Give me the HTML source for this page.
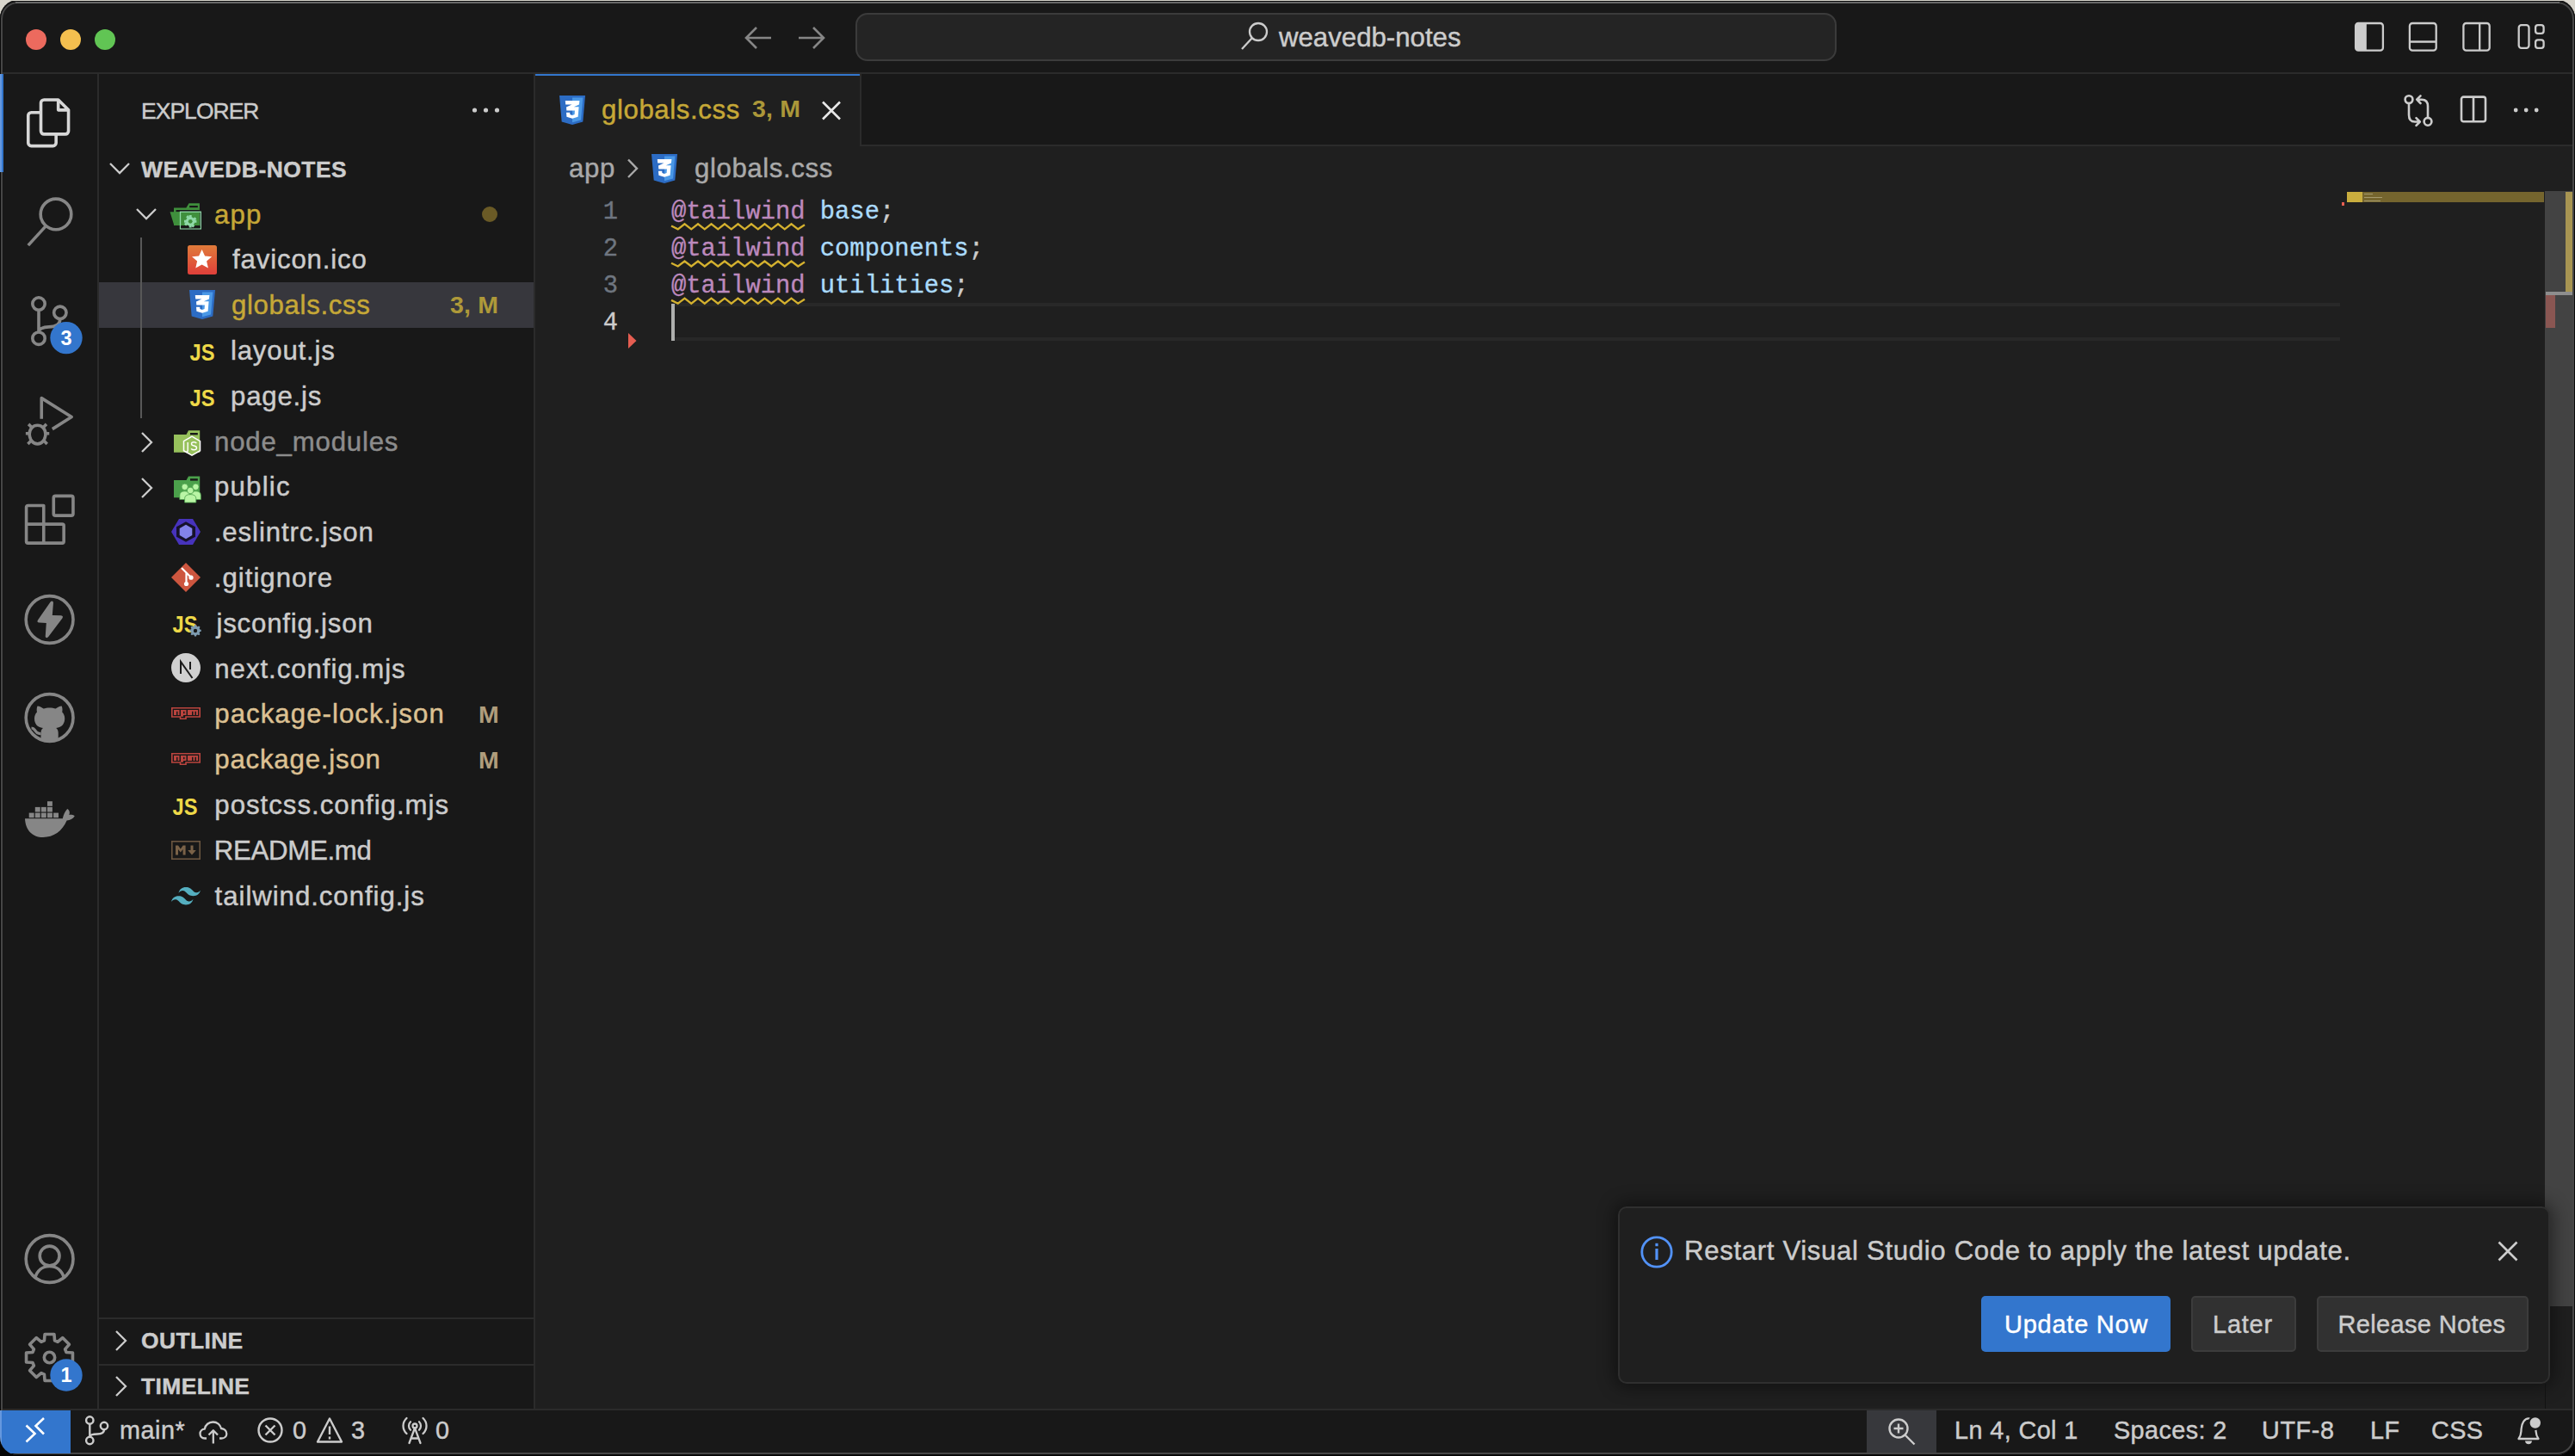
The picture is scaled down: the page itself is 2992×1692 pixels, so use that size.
<!DOCTYPE html>
<html><head><meta charset="utf-8">
<style>
*{margin:0;padding:0;box-sizing:border-box}
html,body{width:2992px;height:1692px;overflow:hidden}
body{background:linear-gradient(#d9d6cd 0,#d9d6cd 50%,#050505 50%,#050505 100%);font-family:"Liberation Sans",sans-serif;position:relative}
#win{position:absolute;left:0;top:0;width:2992px;height:1691px;border-radius:21px;overflow:hidden;background:#181818}
.a{position:absolute}
.t{position:absolute;white-space:nowrap;font-size:31.2px;line-height:31.2px;color:#cccccc;letter-spacing:0.6px;-webkit-text-stroke:0.45px currentColor}
.s{position:absolute;overflow:visible}
.row{position:absolute;left:115px;width:505px;height:52.8px}
</style></head><body>
<div id="win">
<!-- ============ TITLE BAR ============ -->
<div class="a" style="left:0;top:0;width:2992px;height:84px;background:#181818"></div>
<div class="a" style="left:0;top:84px;width:2992px;height:2px;background:#2b2b2b"></div>
<div class="a" style="left:30px;top:34px;width:24px;height:24px;border-radius:50%;background:#ec6a5e"></div>
<div class="a" style="left:70px;top:34px;width:24px;height:24px;border-radius:50%;background:#f4bf4f"></div>
<div class="a" style="left:110px;top:34px;width:24px;height:24px;border-radius:50%;background:#61c554"></div>
<!-- nav arrows -->
<svg class="s" style="left:860px;top:26px" width="42" height="36" viewBox="0 0 42 36"><path d="M36 18H8M19 6L7 18l12 12" fill="none" stroke="#868686" stroke-width="2.6"/></svg>
<svg class="s" style="left:922px;top:26px" width="42" height="36" viewBox="0 0 42 36"><path d="M6 18h28M23 6l12 12-12 12" fill="none" stroke="#868686" stroke-width="2.6"/></svg>
<!-- command center -->
<div class="a" style="left:994px;top:15px;width:1140px;height:56px;border-radius:14px;background:#242424;border:2px solid #3b3b3b"></div>
<svg class="s" style="left:1440px;top:24px" width="36" height="36" viewBox="0 0 36 36"><circle cx="22" cy="13" r="10" fill="none" stroke="#cccccc" stroke-width="2.3"/><path d="M15 20L3 33" stroke="#cccccc" stroke-width="2.3"/></svg>
<div class="t" style="left:1486px;top:28px;letter-spacing:0">weavedb-notes</div>
<!-- layout icons -->
<svg class="s" style="left:2720px;top:15px" width="250" height="55" viewBox="2720 15 250 55" fill="none" stroke="#cccccc" stroke-width="2.3">
 <rect x="2737.1" y="27" width="31.8" height="31.6" rx="3.2"/>
 <path d="M2737.1 30.2A3.2 3.2 0 0 1 2740.3 27H2749.8V58.6H2740.3A3.2 3.2 0 0 1 2737.1 55.4Z" fill="#cccccc" stroke="none"/>
 <path d="M2738 30V55.5" stroke-width="2.2"/>
 <rect x="2799.9" y="27" width="30.8" height="31.6" rx="3.2"/>
 <path d="M2800 48.5H2830.6"/>
 <rect x="2862.4" y="27" width="30.3" height="31.6" rx="3.2"/>
 <path d="M2881.2 27V58.6"/>
 <rect x="2926.7" y="29.2" width="11.8" height="26.6" rx="3"/>
 <rect x="2946.1" y="29.2" width="9.5" height="9.7" rx="2.8"/>
 <rect x="2946.1" y="46.4" width="9.5" height="9.4" rx="2.8"/>
</svg>
<!-- ============ ACTIVITY BAR ============ -->
<div class="a" style="left:113px;top:86px;width:2px;height:1551px;background:#2b2b2b"></div>
<div class="a" style="left:0;top:86px;width:4px;height:114px;background:linear-gradient(90deg,#6598de 0,#6598de 2px,#3376cd 2px);z-index:2"></div>
<svg class="s" style="left:0;top:0" width="115" height="1692" viewBox="0 0 115 1692">
<g fill="none" stroke-width="1" stroke-linejoin="round">
 <g transform="translate(28.8 113.8) scale(3.6)" stroke="#d7d7d7">
  <path d="M5.2 1.6a1 1 0 0 1 1-1H10.8L14.1 3.9V10.7a1 1 0 0 1-1 1H6.2a1 1 0 0 1-1-1Z"/>
  <path d="M10.8 0.6V3.9H14.1" />
  <path d="M5.2 4.7H2.1a1 1 0 0 0-1 1V14.5a1 1 0 0 0 1 1H9.1a1 1 0 0 0 1-1V11.7"/>
 </g>
 <g transform="translate(28.8 229) scale(3.6)" stroke="#868686">
  <circle cx="10.05" cy="5.55" r="4.95"/>
  <path d="M1.1 15.6L6.75 9.4"/>
 </g>
 <g transform="translate(28.8 344.2) scale(3.6)" stroke="#868686">
  <circle cx="4.5" cy="2.45" r="2"/>
  <circle cx="4.5" cy="13.6" r="2"/>
  <circle cx="11.4" cy="5.3" r="2"/>
  <path d="M4.5 4.45V11.6M11.4 7.3C11.4 9.4 9.8 9.9 7.8 9.9C5.8 9.9 4.5 10.6 4.5 11.6"/>
 </g>
 <g transform="translate(28.8 459.4) scale(3.6)" stroke="#868686">
  <path d="M5.4 7.6V0.9L15.1 7.0L8.9 10.9"/>
  <path d="M4.1 9.7c1.5 0 2.6 1.2 2.6 2.8s-1.1 3.2-2.6 3.2-2.6-1.6-2.6-3.2 1.1-2.8 2.6-2.8Z"/>
  <path d="M0.3 12.3H1.5M6.7 12.3H7.9M1.2 9.3L2.2 10.3M7 9.3L6 10.3M1 15.7L2 14.7M7.2 15.7L6.2 14.7"/>
 </g>
 <g transform="translate(28.8 574.6) scale(3.6)" stroke="#868686">
  <path d="M0.5 4.1a.5 .5 0 0 1 .5-.5H6.1V9.6H12.1a.5 .5 0 0 1 .5 .5V15.2a.5 .5 0 0 1-.5.5H1a.5 .5 0 0 1-.5-.5Z"/>
  <path d="M0.5 9.6H6.1V15.7"/>
  <rect x="9.3" y="0.5" width="6.3" height="6.3" rx="0.6"/>
 </g>
 <g stroke="#868686" stroke-width="3.6">
  <circle cx="57.6" cy="720" r="27.4"/>
  <circle cx="57.6" cy="834" r="27.4"/>
  <circle cx="57.6" cy="1463" r="27.4"/>
  <circle cx="57.6" cy="1459.5" r="11.4"/>
  <path d="M40.5 1486C43 1476 50 1471.5 57.6 1471.5S72 1476 74.7 1486"/>
 </g>
</g>
<g fill="#868686">
 <path d="M58.6 699.6Q60.5 697.6 61.8 699.6Q62 700.5 61.9 701.5L60.8 714.9L71 715.2Q74 715.8 72.4 718.4L56.2 740Q54.6 742 53 740.5Q52.6 739.8 52.8 738.5L53.8 724L45.5 723.6Q42.2 723.2 44.2 720.2Z"/>
 <path d="M47.5 860.5V851.5C47.5 849 48.5 847 50 846C43 845 40 841 40 835C40 832 41 829.5 43 827.5C42.5 825.5 42.5 823 43.5 820.5C46 820.5 48.5 822 50.5 823.5C52.5 823 55 822.5 57.6 822.5S62.7 823 64.7 823.5C66.7 822 69.2 820.5 71.7 820.5C72.7 823 72.7 825.5 72.2 827.5C74.2 829.5 75.2 832 75.2 835C75.2 841 72.2 845 65.2 846C66.7 847 67.7 849 67.7 851.5V860.5Z"/>
 <path d="M47.5 852.5C44 853 42 851 40.5 848.5C39.5 847 38 846 36.5 846" fill="none" stroke="#868686" stroke-width="3.2"/>
 <g>
  <path d="M29 951.2H72.8C73.8 946.5 75.8 942.5 78.2 940C80.6 941.2 81.6 944.2 80.2 947C82.5 946.6 85 947 86.8 948.2C84.8 951.6 81.4 953.2 77.6 953.6C72.2 966.2 62.2 973 50 973C37.2 973 29.4 964 29 951.2Z"/>
  <rect x="33.7" y="944.6" width="5.9" height="5.6"/><rect x="40.8" y="944.6" width="5.9" height="5.6"/><rect x="47.9" y="944.6" width="5.9" height="5.6"/><rect x="55" y="944.6" width="5.9" height="5.6"/><rect x="62.1" y="944.6" width="5.9" height="5.6"/>
  <rect x="40.8" y="937.9" width="5.9" height="5.6"/><rect x="47.9" y="937.9" width="5.9" height="5.6"/><rect x="55" y="937.9" width="5.9" height="5.6"/>
  <rect x="55" y="931.2" width="5.9" height="5.6"/>
 </g>
</g>
<g transform="translate(57.5 1577.5)" fill="none" stroke="#868686" stroke-width="3.6" stroke-linejoin="round">
 <path d="M-6.06 -19.58 L-5.46 -26.95 L5.46 -26.95 L6.06 -19.58 L9.56 -18.13 L15.19 -22.92 L22.92 -15.19 L18.13 -9.56 L19.58 -6.06 L26.95 -5.46 L26.95 5.46 L19.58 6.06 L18.13 9.56 L22.92 15.19 L15.19 22.92 L9.56 18.13 L6.06 19.58 L5.46 26.95 L-5.46 26.95 L-6.06 19.58 L-9.56 18.13 L-15.19 22.92 L-22.92 15.19 L-18.13 9.56 L-19.58 6.06 L-26.95 5.46 L-26.95 -5.46 L-19.58 -6.06 L-18.13 -9.56 L-22.92 -15.19 L-15.19 -22.92 L-9.56 -18.13Z"/>
 <circle r="6.2"/>
</g>
<circle cx="77" cy="392.6" r="18.7" fill="#3376cd"/>
<text x="77" y="400.8" text-anchor="middle" font-family="Liberation Sans" font-weight="bold" font-size="23.5" fill="#fff">3</text>
<circle cx="77" cy="1598" r="18.7" fill="#3376cd"/>
<text x="77" y="1606.3" text-anchor="middle" font-family="Liberation Sans" font-weight="bold" font-size="23.5" fill="#fff">1</text>
</svg>


<!-- ============ SIDEBAR ============ -->
<div class="a" style="left:620px;top:86px;width:2px;height:1551px;background:#2b2b2b"></div>
<svg width="0" height="0" style="position:absolute">
<defs>
 <symbol id="i-css" viewBox="0 0 30 34">
  <path d="M0 0H30L27.3 30.5L15 34L2.7 30.5Z" fill="#2c6cc4"/>
  <path d="M15 2.6H27.3L25 28.5L15 31.3Z" fill="#4a98e6"/>
  <path d="M6.8 6H23.4L22.9 10.6L16.8 13.3H22.6L21.6 24.7L15 26.7L8.4 24.7L8 19.8H12.2L12.4 22.1L15 22.9L17.6 22.1L17.9 17.5H8.3L8 13.5L14.4 10.4H7.2Z" fill="#fff"/>
 </symbol>
 <symbol id="i-fav" viewBox="0 0 34 34">
  <defs><linearGradient id="gfav" x1="0" y1="0" x2="0" y2="1"><stop offset="0" stop-color="#e07b3a"/><stop offset="1" stop-color="#df3f3a"/></linearGradient></defs>
  <rect x="0" y="0" width="34" height="34" rx="2.5" fill="url(#gfav)"/>
  <path d="M16.6 5L20.1 12.6L28.2 13.3L22.1 18.6L23.9 26.6L16.6 22.4L9.3 26.6L11.1 18.6L5 13.3L13.1 12.6Z" fill="#fff"/>
 </symbol>
 <symbol id="i-js" viewBox="0 0 30 22">
  <text x="15" y="20.5" text-anchor="middle" font-family="Liberation Sans" font-weight="bold" font-size="27" fill="#eed848" textLength="29" lengthAdjust="spacingAndGlyphs">JS</text>
 </symbol>
 <symbol id="i-fapp" viewBox="0 0 36 32">
  <path d="M6 4H15L17 1H26V6H34V28H6Z" fill="#3f8f3c"/>
  <path d="M0 9H33L30 28H4Z" fill="#47a043"/>
  <rect x="11.5" y="12.5" width="23.5" height="18.5" rx="1" fill="#2e6b2c" stroke="#7cc97a" stroke-width="1.3"/>
  <g transform="translate(22.5 21.5)" fill="#8fd18c"><circle r="4.2"/><path d="M-1.2-6.3h2.4v2.5h-2.4zM-1.2 3.8h2.4v2.5h-2.4zM-6.3-1.2v2.4h2.5v-2.4zM3.8-1.2v2.4h2.5v-2.4z"/><path d="M-4.5-4.5l1.7-1.7 1.8 1.8-1.7 1.7zM4.5 4.5l-1.7 1.7-1.8-1.8 1.7-1.7zM4.5-4.5l1.7 1.7-1.8 1.8-1.7-1.7zM-4.5 4.5l-1.7-1.7 1.8-1.8 1.7 1.7z"/><circle r="1.6" fill="#2e6b2c"/></g>
 </symbol>
 <symbol id="i-fnode" viewBox="0 0 36 32">
  <path d="M0 3H13L16 7H30V28H0Z" fill="#8cbf54"/>
  <path d="M24 13L31.5 17.3V26L24 30.3L16.5 26V17.3Z" fill="#181818" stroke="#ffffff" stroke-width="1.3"/>
  <text x="24" y="27" text-anchor="middle" font-family="Liberation Sans" font-size="10" fill="#fff">JS</text>
 </symbol>
 <symbol id="i-fpub" viewBox="0 0 36 32">
  <path d="M0 3H13L16 7H30V28H0Z" fill="#4aa14a"/>
  <g fill="#a5e09a"><circle cx="13" cy="14" r="3"/><circle cx="27" cy="14" r="3"/><circle cx="20" cy="17" r="3.3"/><path d="M7.5 25c0-4 2.5-6.5 5.5-6.5s5.5 2.5 5.5 6.5z"/><path d="M21.5 25c0-4 2.5-6.5 5.5-6.5s5.5 2.5 5.5 6.5z"/><path d="M13.5 31c0-5 3-8 6.5-8s6.5 3 6.5 8z"/></g>
 </symbol>
 <symbol id="i-eslint" viewBox="0 0 34 30">
  <path d="M9 0H25L34 15L25 30H9L0 15Z" fill="#4733bc"/>
  <path d="M17 3.2L28 9.2V20.8L17 26.8L6 20.8V9.2Z" fill="#16122b"/>
  <path d="M17 6.8L24.3 11V19L17 23.2L9.7 19V11Z" fill="#8383ea"/>
 </symbol>
 <symbol id="i-git" viewBox="0 0 34 34">
  <path d="M17 0L34 17L17 34L0 17Z" fill="#cd563f"/>
  <path d="M12 6L17.5 11.5M17.5 11.5V24M17.5 11.5L23 17" stroke="#fff" stroke-width="2.2" fill="none"/>
  <circle cx="17.5" cy="24.5" r="2.6" fill="#fff"/><circle cx="23" cy="17.2" r="2.6" fill="#fff"/>
 </symbol>
 <symbol id="i-next" viewBox="0 0 34 34">
  <circle cx="17" cy="17" r="17" fill="#d0d0d0"/>
  <path d="M11 24V10L24.5 29" stroke="#1b1b1b" stroke-width="2" fill="none"/>
  <path d="M22 10V19" stroke="#1b1b1b" stroke-width="2"/>
 </symbol>
 <symbol id="i-npm" viewBox="0 0 34 14">
  <path d="M0.8 0.8H33.2V11H17V13.2H10.5V11H0.8Z" fill="none" stroke="#bb443e" stroke-width="1.6"/>
  <path d="M3 3H9.5V9H7.5V4.8H6V9H3ZM11 3H17.5V9H14V10.8H11ZM14 4.8V7.2H15.5V4.8ZM19 3H31V9H29V4.8H27.5V9H25.5V4.8H24V9H19Z" fill="#bb443e"/>
 </symbol>
 <symbol id="i-md" viewBox="0 0 34 22">
  <rect x="0.8" y="0.8" width="32.4" height="20.4" fill="none" stroke="#6b5640" stroke-width="1.6"/>
  <path d="M5 16.5V5.5H8L10.8 9.5L13.6 5.5H16.6V16.5H13.6V10L10.8 13.5L8 10V16.5Z" fill="#7a6248"/>
  <path d="M22.5 5.5H25.5V11H28.8L24 16.5L19.2 11H22.5Z" fill="#7a6248"/>
 </symbol>
 <symbol id="i-tw" viewBox="0 0 34 22">
  <path d="M17 1C12.5 1 9.7 3.2 8.5 7.7C10.2 5.5 12.2 4.6 14.5 5.2C15.8 5.5 16.7 6.5 17.7 7.5C19.4 9.2 21.3 11.2 25.5 11.2C30 11.2 32.8 9 34 4.5C32.3 6.7 30.3 7.6 28 7C26.7 6.7 25.8 5.7 24.8 4.7C23.1 3 21.2 1 17 1ZM8.5 11.2C4 11.2 1.2 13.4 0 17.9C1.7 15.7 3.7 14.8 6 15.4C7.3 15.7 8.2 16.7 9.2 17.7C10.9 19.4 12.8 21.4 17 21.4C21.5 21.4 24.3 19.2 25.5 14.7C23.8 16.9 21.8 17.8 19.5 17.2C18.2 16.9 17.3 15.9 16.3 14.9C14.6 13.2 12.7 11.2 8.5 11.2Z" fill="#55afc0"/>
 </symbol>
 <symbol id="i-gear" viewBox="-8 -8 16 16">
  <path d="M-1.2-7H1.2L1.6-5.2 3.2-4.5 4.8-5.5 6.5-3.8 5.5-2.2 6.1-0.6 7.9-0.3V2.1L6.1 2.5 5.4 4.1 6.5 5.7 4.8 7.4 3.2 6.4 1.6 7.1 1.2 8.9H-1.2L-1.6 7.1-3.2 6.4-4.8 7.4-6.5 5.7-5.5 4.1-6.1 2.5-7.9 2.1V-0.3L-6.1-0.6-5.5-2.2-6.5-3.8-4.8-5.5-3.2-4.5-1.6-5.2Z" transform="translate(0 -0.95) scale(0.85)" fill="#7d9bb0"/>
  <circle cx="0" cy="0" r="2.2" fill="#181818"/>
 </symbol>
</defs>
</svg>
<div class="t" style="left:164px;top:116px;font-size:26.4px;line-height:26.4px;letter-spacing:-0.9px">EXPLORER</div>
<svg class="s" style="left:540px;top:118px" width="50" height="20" viewBox="0 0 50 20"><circle cx="11.5" cy="10" r="2.6" fill="#cccccc"/><circle cx="24.5" cy="10" r="2.6" fill="#cccccc"/><circle cx="37.5" cy="10" r="2.6" fill="#cccccc"/></svg>
<!-- section header -->
<svg class="s" style="left:125px;top:184px" width="30" height="24" viewBox="0 0 30 24"><path d="M3 6L14 17L25 6" fill="none" stroke="#cccccc" stroke-width="2.3"/></svg>
<div class="t" style="left:164px;top:183.5px;font-size:26.4px;line-height:26.4px;font-weight:bold;letter-spacing:0.5px">WEAVEDB-NOTES</div>
<!-- rows -->
<div class="a" style="left:115px;top:328.4px;width:505px;height:52.8px;background:#37373d"></div>
<div class="a" style="left:162.7px;top:276px;width:2px;height:210px;background:#585858"></div>
<svg class="s" style="left:152px;top:236px" width="36" height="26" viewBox="0 0 36 26"><path d="M7 7L18 18L29 7" fill="none" stroke="#cccccc" stroke-width="2.3"/></svg>
<svg class="s" style="left:195px;top:232px" width="42" height="38" viewBox="195 232 42 38">
 <path d="M202 262V241.5H216.4L219.5 236.3H231.9V262Z" fill="#3f8f3c"/>
 <rect x="220.2" y="239" width="9.6" height="2.2" fill="#181818"/>
 <rect x="204.5" y="244" width="27.4" height="2.3" fill="#181818"/>
 <path d="M197.5 246.3H231.9V262H202.4Z" fill="#3f8f3c"/>
 <rect x="209.5" y="246.2" width="23.8" height="19.7" fill="none" stroke="#8fd9a8" stroke-width="1.3"/>
 <path d="M210.2 262.6H232.6V265.3H210.2Z" fill="#181818"/>
 <g transform="translate(221.2 257.3)" fill="#8fd9a8"><circle r="5.3"/><path d="M-1.5-7.2h3v3h-3zM-1.5 4.2h3v3h-3zM-7.2-1.5v3h3v-3zM4.2-1.5v3h3v-3z"/><path d="M-5.1-5.1l2.1-2.1 2.1 2.1-2.1 2.1zM5.1 5.1l-2.1 2.1-2.1-2.1 2.1-2.1zM5.1-5.1l2.1 2.1-2.1 2.1-2.1-2.1zM-5.1 5.1l-2.1-2.1 2.1-2.1 2.1 2.1z"/><circle r="2.4" fill="#3f8f3c"/></g>
</svg>
<div class="t" style="left:249.0px;top:233.6px;letter-spacing:1.10px;color:#c6a837">app</div>
<div class="a" style="left:560px;top:240px;width:18px;height:18px;border-radius:50%;background:#6a5a26"></div>

<svg class="s" style="left:218px;top:285px" width="34" height="34"><use href="#i-fav"/></svg>
<div class="t" style="left:270.0px;top:286.4px;letter-spacing:0.85px;">favicon.ico</div>

<svg class="s" style="left:220px;top:337px" width="30" height="34"><use href="#i-css"/></svg>
<div class="t" style="left:269.0px;top:339.2px;letter-spacing:0.65px;color:#c6a837">globals.css</div>
<div class="t" style="left:523px;top:340px;font-size:28.5px;line-height:28.5px;font-weight:bold;-webkit-text-stroke:0;color:#ae9939;letter-spacing:0.2px">3, M</div>

<svg class="s" style="left:220px;top:398px" width="30" height="22"><use href="#i-js"/></svg>
<div class="t" style="left:268.0px;top:392px;letter-spacing:0.80px;">layout.js</div>

<svg class="s" style="left:220px;top:451px" width="30" height="22"><use href="#i-js"/></svg>
<div class="t" style="left:268.0px;top:444.8px;letter-spacing:0.80px;">page.js</div>

<svg class="s" style="left:156px;top:500px" width="28" height="28" viewBox="0 0 28 28"><path d="M9 3L20 14L9 25" fill="none" stroke="#cccccc" stroke-width="2.3"/></svg>
<svg class="s" style="left:195px;top:495px" width="42" height="40" viewBox="195 495 42 40">
 <path d="M202 525.7V505H216.5L219 500.3H232.2V525.7Z" fill="#97c15c"/>
 <rect x="221" y="503" width="8.8" height="2.4" fill="#181818"/>
 <path d="M223 507.2L232.5 512.7V523.7L223 529.2L213.5 523.7V512.7Z" fill="#97c15c" stroke="#ffffff" stroke-width="1.5"/>
 <path d="M218.2 514V523.3Q218.2 525.5 216 525.5" fill="none" stroke="#fff" stroke-width="1.4"/>
 <path d="M228.3 515.2Q227.5 513.8 225.3 513.8Q222.5 513.8 222.5 515.8Q222.5 517.6 225.3 518Q228.5 518.5 228.5 520.5Q228.5 522.8 225.3 522.8Q223 522.8 222.2 521.3" fill="none" stroke="#fff" stroke-width="1.4"/>
</svg>
<div class="t" style="left:249.0px;top:497.6px;letter-spacing:0.80px;color:#8c8c8c">node_modules</div>

<svg class="s" style="left:156px;top:553px" width="28" height="28" viewBox="0 0 28 28"><path d="M9 3L20 14L9 25" fill="none" stroke="#cccccc" stroke-width="2.3"/></svg>
<svg class="s" style="left:195px;top:548px" width="42" height="42" viewBox="195 548 42 42">
 <path d="M202 578.2V558H216.5L219 553.5H232.2V578.2Z" fill="#4ba14b"/>
 <rect x="221" y="556.2" width="8.8" height="2.4" fill="#181818"/>
 <g fill="#b9f5a5" stroke="#4ba14b" stroke-width="0.8">
  <circle cx="214.7" cy="565.8" r="3.7"/><circle cx="227.4" cy="565.8" r="3.7"/>
  <path d="M208.8 580.5V575.5Q208.8 570.8 214.7 570.8Q220.6 570.8 220.6 575.5V580.5Z"/>
  <path d="M221.5 580.5V575.5Q221.5 570.8 227.4 570.8Q233.3 570.8 233.3 575.5V580.5Z"/>
  <circle cx="221.2" cy="570" r="3.8"/>
  <path d="M214.6 584V579.5Q214.6 574.6 221.2 574.6Q227.8 574.6 227.8 579.5V584Z"/>
 </g>
</svg>
<div class="t" style="left:249.0px;top:550.4px;letter-spacing:1.20px;">public</div>

<svg class="s" style="left:199px;top:603px" width="34" height="30"><use href="#i-eslint"/></svg>
<div class="t" style="left:248.8px;top:603.2px;letter-spacing:0.90px;">.eslintrc.json</div>

<svg class="s" style="left:199px;top:654px" width="34" height="34"><use href="#i-git"/></svg>
<div class="t" style="left:248.8px;top:656px;letter-spacing:1.00px;">.gitignore</div>

<svg class="s" style="left:200px;top:714px" width="30" height="22"><use href="#i-js"/></svg>
<svg class="s" style="left:219px;top:725px" width="16" height="16"><use href="#i-gear"/></svg>
<div class="t" style="left:251.5px;top:708.8px;letter-spacing:0.80px;">jsconfig.json</div>

<svg class="s" style="left:199px;top:759px" width="34" height="34"><use href="#i-next"/></svg>
<div class="t" style="left:249.3px;top:761.6px;letter-spacing:0.95px;">next.config.mjs</div>

<svg class="s" style="left:199px;top:822px" width="34" height="14"><use href="#i-npm"/></svg>
<div class="t" style="left:249.3px;top:814.4px;letter-spacing:1.05px;color:#dcc193">package-lock.json</div>
<div class="t" style="left:556px;top:816.2px;font-size:28.5px;line-height:28.5px;font-weight:bold;-webkit-text-stroke:0;color:#b09d7c">M</div>

<svg class="s" style="left:199px;top:875px" width="34" height="14"><use href="#i-npm"/></svg>
<div class="t" style="left:249.3px;top:867.2px;letter-spacing:0.80px;color:#dcc193">package.json</div>
<div class="t" style="left:556px;top:869px;font-size:28.5px;line-height:28.5px;font-weight:bold;-webkit-text-stroke:0;color:#b09d7c">M</div>

<svg class="s" style="left:200px;top:926px" width="30" height="22"><use href="#i-js"/></svg>
<div class="t" style="left:249.3px;top:920px;letter-spacing:1.00px;">postcss.config.mjs</div>

<svg class="s" style="left:199px;top:977px" width="34" height="22"><use href="#i-md"/></svg>
<div class="t" style="left:248.8px;top:972.8px;letter-spacing:-0.30px;">README.md</div>

<svg class="s" style="left:199px;top:1030px" width="34" height="22"><use href="#i-tw"/></svg>
<div class="t" style="left:249.6px;top:1025.6px;letter-spacing:0.95px;">tailwind.config.js</div>

<!-- outline / timeline -->
<div class="a" style="left:115px;top:1531px;width:505px;height:2px;background:#2b2b2b"></div>
<div class="a" style="left:115px;top:1585px;width:505px;height:2px;background:#2b2b2b"></div>
<svg class="s" style="left:128px;top:1544px" width="28" height="28" viewBox="0 0 28 28"><path d="M7 3L18 14L7 25" fill="none" stroke="#cccccc" stroke-width="2.3"/></svg>
<div class="t" style="left:164px;top:1545px;font-size:26.4px;line-height:26.4px;font-weight:bold;letter-spacing:0.4px">OUTLINE</div>
<svg class="s" style="left:128px;top:1597px" width="28" height="28" viewBox="0 0 28 28"><path d="M7 3L18 14L7 25" fill="none" stroke="#cccccc" stroke-width="2.3"/></svg>
<div class="t" style="left:164px;top:1598px;font-size:26.4px;line-height:26.4px;font-weight:bold;letter-spacing:0.4px">TIMELINE</div>


<!-- ============ EDITOR ============ -->
<div class="a" style="left:622px;top:86px;width:2370px;height:82px;background:#181818"></div>
<div class="a" style="left:622px;top:168px;width:2370px;height:2px;background:#2b2b2b"></div>
<div class="a" style="left:622px;top:170px;width:2370px;height:1467px;background:#1f1f1f"></div>
<!-- active tab -->
<div class="a" style="left:622px;top:86px;width:377px;height:84px;background:#1f1f1f"></div>
<div class="a" style="left:622px;top:86px;width:377px;height:2px;background:#3376cd"></div>
<div class="a" style="left:999px;top:86px;width:2px;height:82px;background:#2b2b2b"></div>
<svg class="s" style="left:650px;top:110.5px" width="30" height="34"><use href="#i-css"/></svg>
<div class="t" style="left:699px;top:112px;color:#c6a837">globals.css</div>
<div class="t" style="left:874px;top:112.3px;font-size:28.5px;line-height:28.5px;font-weight:bold;-webkit-text-stroke:0;color:#ab9739;letter-spacing:0.2px">3, M</div>
<svg class="s" style="left:952px;top:114px" width="28" height="28" viewBox="0 0 28 28"><path d="M4 4.5L24 24.5M24 4.5L4 24.5" stroke="#e8e8e8" stroke-width="2.6"/></svg>
<!-- editor actions -->
<svg class="s" style="left:2785px;top:105px" width="45" height="45" viewBox="2785 105 45 45" fill="none" stroke="#cccccc" stroke-width="2.6" stroke-linecap="round" stroke-linejoin="round">
 <circle cx="2799" cy="115.6" r="4.4"/><circle cx="2821" cy="141.3" r="4.4"/>
 <path d="M2799 120V133.5Q2799 141.5 2806 141.5H2811.5M2807.5 137.2L2811.8 141.5L2807.5 145.8"/>
 <path d="M2821 136.9V123.5Q2821 115.7 2814 115.7H2808.5M2812.5 111.4L2808.2 115.7L2812.5 120"/>
</svg>
<svg class="s" style="left:2855px;top:108px" width="40" height="38" viewBox="0 0 40 38" fill="none" stroke="#cccccc" stroke-width="2.6"><rect x="5" y="4.6" width="28" height="28.6" rx="2.5"/><path d="M19 4.6V33.2"/></svg>
<svg class="s" style="left:2916px;top:116.5px" width="40" height="22" viewBox="0 0 40 22"><circle cx="7.2" cy="11" r="2.4" fill="#cccccc"/><circle cx="19.2" cy="11" r="2.4" fill="#cccccc"/><circle cx="31.2" cy="11" r="2.4" fill="#cccccc"/></svg>
<!-- breadcrumbs -->
<div class="t" style="left:661px;top:179.6px;color:#a9a9a9">app</div>
<svg class="s" style="left:724px;top:182px" width="22" height="28" viewBox="0 0 22 28"><path d="M6 3.5L16 13.8L6 24" fill="none" stroke="#a9a9a9" stroke-width="2.4"/></svg>
<svg class="s" style="left:757px;top:179px" width="30" height="34"><use href="#i-css"/></svg>
<div class="t" style="left:807px;top:179.6px;color:#a9a9a9">globals.css</div>
<!-- line numbers -->
<div class="a" style="left:600px;top:224.7px;width:118px;text-align:right;font-family:'Liberation Mono',monospace;font-size:28.8px;line-height:43.2px;color:#6f7680;white-space:pre;-webkit-text-stroke:0.35px currentColor">1
2
3
<span style="color:#cccccc">4</span></div>
<!-- current line -->
<div class="a" style="left:780px;top:352.4px;width:1939px;height:43.5px;border-top:4px solid #282828;border-bottom:4px solid #282828"></div>
<div class="a" style="left:780px;top:353.4px;width:4.4px;height:42.5px;background:#aeafad"></div>
<svg class="s" style="left:729px;top:386px" width="12" height="20" viewBox="0 0 12 20"><path d="M1 1L10.5 10L1 19Z" fill="#e55d51"/></svg>
<!-- code -->
<div class="a" style="left:780px;top:224.7px;font-family:'Liberation Mono',monospace;font-size:28.8px;line-height:43.2px;color:#cccccc;white-space:pre;-webkit-text-stroke:0.35px currentColor"><span style="color:#bc89bd">@tailwind</span> <span style="color:#aadafa">base</span>;
<span style="color:#bc89bd">@tailwind</span> <span style="color:#aadafa">components</span>;
<span style="color:#bc89bd">@tailwind</span> <span style="color:#aadafa">utilities</span>;</div>
<svg class="s" style="left:778px;top:256px" width="160" height="100" viewBox="0 0 160 100">
 <g fill="none" stroke="#d4b12f" stroke-width="2.3" stroke-linejoin="miter">
  <path id="sq" d="M2 6.5L9.75 10.3L17.5 4.3L25.25 10.3L33 4.3L40.75 10.3L48.5 4.3L56.25 10.3L64 4.3L71.75 10.3L79.5 4.3L87.25 10.3L95 4.3L102.75 10.3L110.5 4.3L118.25 10.3L126 4.3L133.75 10.3L141.5 4.3L149.25 10.3L157 5.3"/>
  <use href="#sq" y="43.2"/>
  <use href="#sq" y="86.4"/>
 </g>
</svg>
<!-- minimap -->
<div class="a" style="left:2727px;top:223px;width:18px;height:12px;background:#c9ad3e"></div>
<div class="a" style="left:2745px;top:223px;width:211px;height:12px;background:#75652e"></div>
<div class="a" style="left:2747px;top:224.5px;width:10px;height:1.6px;background:#a59a6e"></div>
<div class="a" style="left:2747px;top:228.5px;width:21px;height:1.6px;background:#a59a6e"></div>
<div class="a" style="left:2747px;top:232.5px;width:19px;height:1.6px;background:#a59a6e"></div>
<div class="a" style="left:2721px;top:235px;width:2.5px;height:4px;background:#e55d51"></div>
<!-- scrollbar -->
<div class="a" style="left:2957px;top:222px;width:33px;height:1296px;background:#434343"></div>
<div class="a" style="left:2981px;top:223px;width:9px;height:116px;background:#a89552"></div>
<div class="a" style="left:2958px;top:339px;width:32px;height:4px;background:#8e8e8e"></div>
<div class="a" style="left:2958px;top:343px;width:10.5px;height:38px;background:#8a5652"></div>
<!-- notification -->
<div class="a" style="left:1880px;top:1402px;width:1083px;height:206px;border-radius:10px;background:#1f1f1f;border:2px solid #2f2f2f;box-shadow:0 0 20px 4px rgba(0,0,0,0.45)"></div>
<svg class="s" style="left:1904px;top:1434px" width="42" height="42" viewBox="0 0 42 42"><circle cx="21" cy="21" r="17.2" fill="none" stroke="#5292f7" stroke-width="2.8"/><rect x="19.4" y="10.8" width="3.2" height="3.4" fill="#5292f7"/><path d="M21 17V30" stroke="#5292f7" stroke-width="3.2"/></svg>
<div class="t" style="left:1957px;top:1438.4px;letter-spacing:0.65px">Restart Visual Studio Code to apply the latest update.</div>
<svg class="s" style="left:2900px;top:1440px" width="28" height="28" viewBox="0 0 28 28"><path d="M3.5 3.5L24.5 24.5M24.5 3.5L3.5 24.5" stroke="#cccccc" stroke-width="2.6"/></svg>
<div class="a" style="left:2302px;top:1506px;width:220px;height:65px;border-radius:5px;background:#3376cd"></div>
<div class="t" style="left:2329px;top:1524.5px;color:#ffffff;font-size:29px;line-height:29px;letter-spacing:0.75px">Update Now</div>
<div class="a" style="left:2546px;top:1506px;width:122px;height:65px;border-radius:5px;background:#313131;border:2px solid #3c3c3c"></div>
<div class="t" style="left:2571px;top:1524.5px;font-size:29px;line-height:29px;letter-spacing:0.75px">Later</div>
<div class="a" style="left:2692px;top:1506px;width:246px;height:65px;border-radius:5px;background:#313131;border:2px solid #3c3c3c"></div>
<div class="t" style="left:2716.5px;top:1524.5px;font-size:29px;line-height:29px;letter-spacing:0.35px">Release Notes</div>


<!-- ============ STATUS BAR ============ -->
<div class="a" style="left:0;top:1637px;width:2992px;height:2px;background:#2b2b2b"></div>
<div class="a" style="left:0;top:1639px;width:2992px;height:53px;background:#181818"></div>
<div class="a" style="left:0;top:1639px;width:82px;height:50px;background:linear-gradient(90deg,#6598de 0,#6598de 2px,#3376cd 2px);z-index:2"></div>
<svg class="s" style="left:0;top:1639px;z-index:3" width="82" height="53" viewBox="0 1639 82 53" fill="none" stroke="#ffffff" stroke-width="2.6"><path d="M30.5 1656.5L40.5 1666L30.5 1675.5M51 1648L41.5 1657L51 1666.5"/></svg>
<svg class="s" style="left:96px;top:1643px" width="34" height="38" viewBox="0 0 34 38" fill="none" stroke="#cccccc" stroke-width="2.4">
 <circle cx="8.3" cy="7.5" r="4.2"/><circle cx="8.3" cy="31" r="4.2"/><circle cx="25" cy="14" r="4.2"/>
 <path d="M8.3 11.7V26.8M25 18.2C25 22 22 23.5 17 23.5C11.5 23.5 8.3 24.5 8.3 26.8"/>
</svg>
<div class="t" style="left:139px;top:1648.4px;font-size:28.8px;line-height:28.8px;letter-spacing:0.5px">main*</div>
<svg class="s" style="left:230px;top:1648px" width="36" height="32" viewBox="0 0 36 32" fill="none" stroke="#cccccc" stroke-width="2.3" stroke-linejoin="round">
 <path d="M10 23.5H8C4.5 23.5 2.5 21 2.5 18C2.5 15 4.8 12.8 7.8 12.6C8.6 7.8 12.6 4.5 17.5 4.5C22.2 4.5 26 7.6 27 12C30.5 12.3 33.3 14.8 33.3 18.2C33.3 21.3 30.8 23.5 27.5 23.5H25"/>
 <path d="M17.8 29.5V14.5M12.5 19.5L17.8 14.2L23 19.5"/>
</svg>
<svg class="s" style="left:297px;top:1645px" width="34" height="34" viewBox="0 0 34 34" fill="none" stroke="#cccccc" stroke-width="2.4"><circle cx="17" cy="17" r="13.5"/><path d="M11.5 11.5L22.5 22.5M22.5 11.5L11.5 22.5"/></svg>
<div class="t" style="left:340px;top:1648.4px;font-size:28.8px;line-height:28.8px;letter-spacing:0.5px">0</div>
<svg class="s" style="left:366px;top:1645px" width="34" height="34" viewBox="0 0 34 34" fill="none" stroke="#cccccc" stroke-width="2.4" stroke-linejoin="round"><path d="M17 3.5L31 30.5H3Z"/><path d="M17 12.5V22M17 24.5V27.5"/></svg>
<div class="t" style="left:408px;top:1648.4px;font-size:28.8px;line-height:28.8px;letter-spacing:0.5px">3</div>
<svg class="s" style="left:465px;top:1644px" width="34" height="36" viewBox="0 0 34 36" fill="none" stroke="#cccccc" stroke-width="2.3" stroke-linecap="round">
 <path d="M7.5 4C4.8 6.5 3.5 9.5 3.5 13S4.8 19.5 7.5 22M26.5 4C29.2 6.5 30.5 9.5 30.5 13S29.2 19.5 26.5 22M12 8.3C10.7 9.6 10 11.2 10 13S10.7 16.4 12 17.7M22 8.3C23.3 9.6 24 11.2 24 13S23.3 16.4 22 17.7"/>
 <circle cx="17" cy="13" r="2.5"/>
 <path d="M17 15.5L10.5 33M17 15.5L23.5 33M12.5 27.5H21.5"/>
</svg>
<div class="t" style="left:506px;top:1648.4px;font-size:28.8px;line-height:28.8px;letter-spacing:0.5px">0</div>
<!-- right -->
<div class="a" style="left:2169px;top:1639px;width:81px;height:50px;background:#37383c"></div>
<svg class="s" style="left:2192px;top:1646px" width="36" height="36" viewBox="0 0 36 36" fill="none" stroke="#cccccc" stroke-width="2.4"><circle cx="14" cy="14" r="10.5"/><path d="M21.5 21.5L32.5 32.5M14 8.5V19.5M8.5 14H19.5"/></svg>
<div class="t" style="left:2271px;top:1648.4px;font-size:28.8px;line-height:28.8px;letter-spacing:0.4px">Ln 4, Col 1</div>
<div class="t" style="left:2456px;top:1648.4px;font-size:28.8px;line-height:28.8px;letter-spacing:0.4px">Spaces: 2</div>
<div class="t" style="left:2628px;top:1648.4px;font-size:28.8px;line-height:28.8px;letter-spacing:0.6px">UTF-8</div>
<div class="t" style="left:2754px;top:1648.4px;font-size:28.8px;line-height:28.8px;letter-spacing:0.4px">LF</div>
<div class="t" style="left:2825px;top:1648.4px;font-size:28.8px;line-height:28.8px;letter-spacing:0.4px">CSS</div>
<svg class="s" style="left:2915px;top:1640px" width="50" height="48" viewBox="2915 1640 50 48">
 <path d="M2926.5 1672H2949.5C2947.6 1669.5 2946.8 1667 2946.6 1663.5L2946.4 1660.5C2946 1653.5 2942.5 1648.3 2938 1648.3S2930 1653.5 2929.6 1660.5L2929.4 1663.5C2929.2 1667 2928.4 1669.5 2926.5 1672Z" fill="none" stroke="#cccccc" stroke-width="2.3" stroke-linejoin="round"/>
 <path d="M2934 1674.5Q2934.5 1678.3 2938 1678.3T2942 1674.5Z" fill="#cccccc"/>
 <circle cx="2945.8" cy="1653.5" r="8.6" fill="#181818"/>
 <circle cx="2945.8" cy="1653.5" r="6.2" fill="#cccccc"/>
</svg>
<div class="a" style="left:2957px;top:1608px;width:1px;height:29px;background:#121212"></div>

</div>
<!-- window frame -->
<div class="a" style="left:0;top:1px;width:2992px;height:1690px;border-radius:21px;box-shadow:inset 0 0 0 1px #0a0a0a, inset 0 0 0 3px #464646;pointer-events:none;z-index:1"></div>
<div class="a" style="left:18px;top:2px;width:2956px;height:2px;background:#686868;z-index:1"></div>
<div class="a" style="left:0;top:0;width:2992px;height:1px;background:#d9d6cd;z-index:1"></div>
</body></html>
